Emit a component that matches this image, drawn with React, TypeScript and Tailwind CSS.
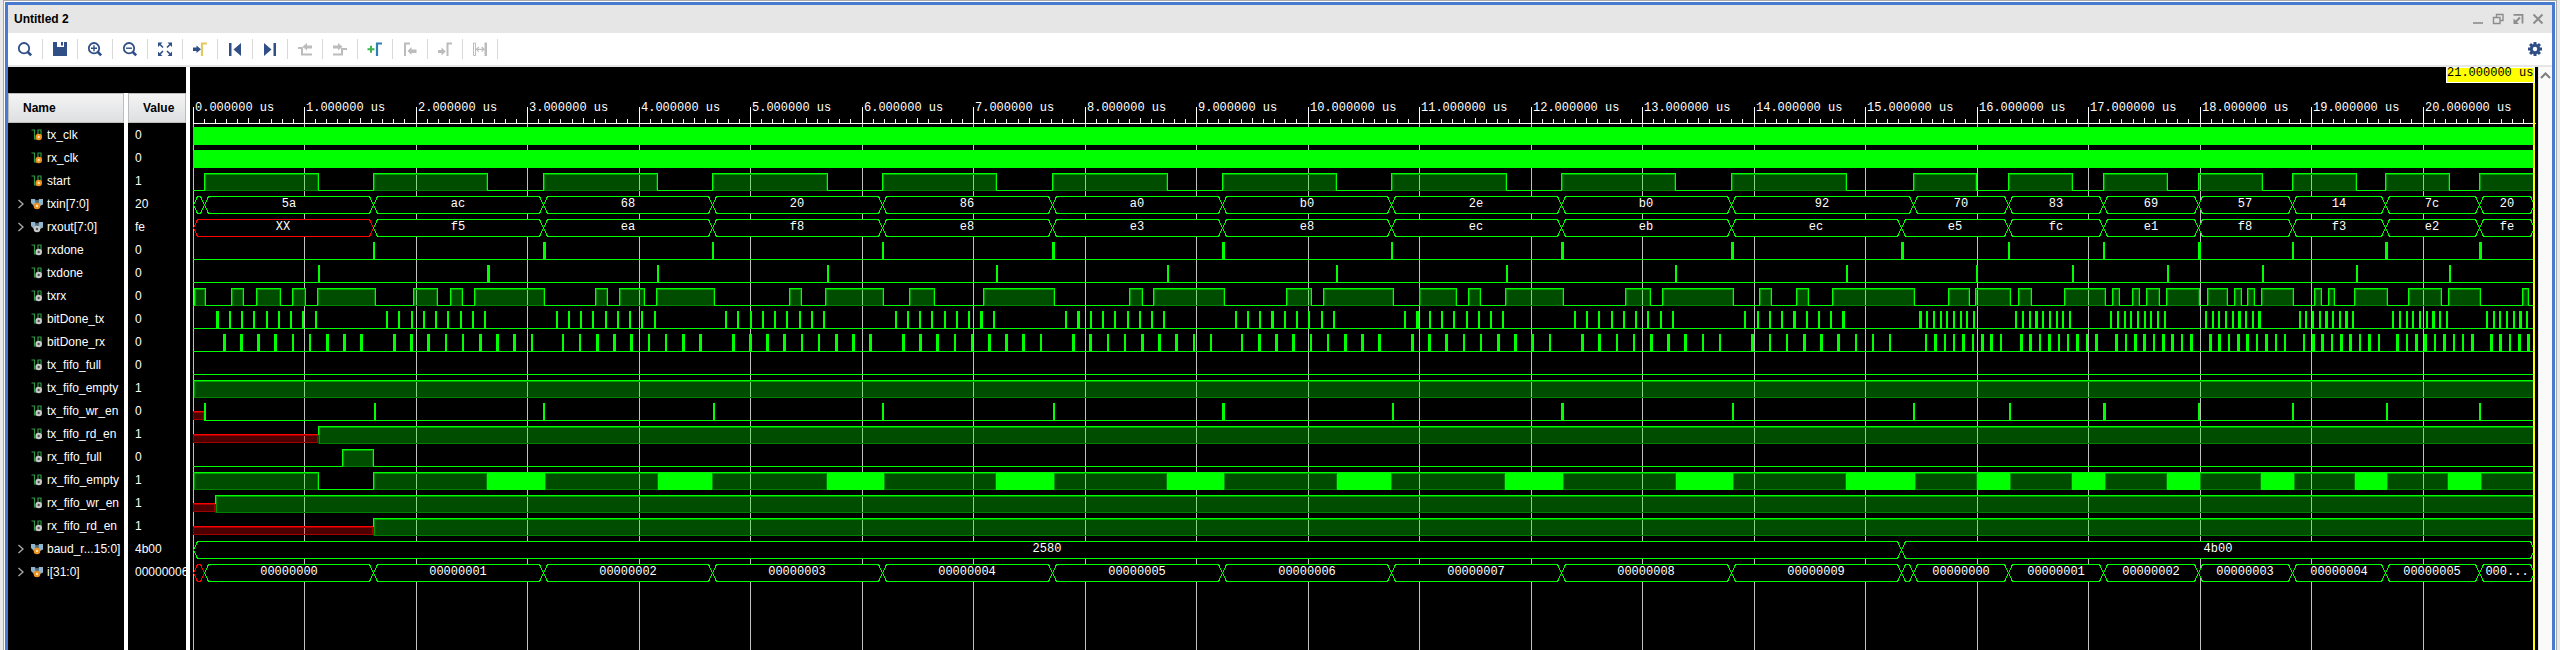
import { useLayoutEffect, useRef, useState, type ReactNode } from "react";

/* ---------- signal data (positions in samples along the time axis) ---------- */

const START = 193;
const END = 2534;
const SAMPLES_PER_US = 111.5;

type Pulse = number | [number, number];
type Segment = [from: number, label: string, unknown?: boolean];

type Wave =
  | { kind: "solid" }
  | { kind: "level"; high: [number, number][]; busy?: [number, number][]; unknownUntil?: number; pulses?: Pulse[] }
  | { kind: "bus"; segments: Segment[] };

type Signal = { name: string; value: string; icon: "in" | "out" | "busIn" | "busOut"; wave: Wave };

const FRAMES = [373, 543, 712, 882, 1052, 1222, 1391, 1561, 1731];
const FAST_FRAMES = [2008, 2103, 2198, 2292, 2385, 2479];

const segments = (at: number[], labels: string[]): Segment[] => at.map((x, i) => [x, labels[i]]);

const START_HIGH: [number, number][] = [
  [204, 318], [373, 487], [543, 657], [712, 827], [882, 996], [1052, 1167], [1222, 1336], [1391, 1506],
  [1561, 1675], [1731, 1846], [1913, 1976], [2008, 2072], [2103, 2167], [2198, 2262], [2292, 2356],
  [2385, 2449], [2479, END],
];

const TXRX_HIGH: [number, number][] = [
  [194, 205], [231, 243], [256, 280], [292, 305], [317, 375], [413, 437], [450, 462], [474, 544],
  [595, 607], [619, 644], [656, 714], [789, 801], [825, 883], [909, 934], [983, 1054], [1129, 1142],
  [1153, 1224], [1286, 1311], [1323, 1393], [1419, 1456], [1468, 1480], [1505, 1563], [1625, 1650],
  [1662, 1733], [1759, 1771], [1796, 1808], [1832, 1914], [1948, 1969], [1975, 2010], [2018, 2031],
  [2064, 2105], [2112, 2119], [2132, 2139], [2146, 2159], [2166, 2199], [2207, 2227], [2234, 2241],
  [2247, 2254], [2261, 2293], [2314, 2321], [2328, 2334], [2354, 2387], [2408, 2441], [2448, 2480],
  [2522, 2528],
];

const BIT_TX: Pulse[] = [
  [216, 3], 229, 241, 253, 266, 278, 290, 302, 315, 386, 398, 411, 423, 435, 447, 460, 472, 484,
  556, 568, 580, 592, 605, 617, 629, 641, 654, 725, 737, 750, 762, 774, 786, 799, 811, 823,
  895, 907, 919, 931, 944, 956, 968, [980, 3], 993, 1065, [1077, 3], 1090, 1102, 1114, 1127, 1139, 1151, 1163,
  1235, 1247, 1259, [1271, 3], 1284, 1296, 1308, 1321, 1333, 1404, [1416, 3], 1429, 1441, 1453, 1466, 1478, 1490, 1502,
  1574, 1586, 1598, 1611, 1623, 1635, 1647, 1660, 1672, 1744, 1757, 1769, 1781, [1793, 3], 1806, 1818, 1830, [1842, 3],
  [1919, 3], 1926, 1933, 1940, 1946, 1953, 1960, 1966, 1973, 2015, 2022, 2029, [2035, 3], 2042, 2049, 2056, 2062, 2069,
  2110, 2117, 2124, 2130, 2137, 2144, 2150, 2157, 2164, 2205, 2212, 2218, 2225, 2232, [2238, 3], 2245, 2252, [2258, 3],
  2299, 2305, 2312, 2319, [2325, 3], 2332, 2339, [2345, 3], 2352, 2392, 2399, 2406, 2412, 2419, 2426, [2432, 3], 2439, 2446,
  2486, 2493, 2499, 2506, 2513, [2519, 3], 2526,
];

const BIT_RX: Pulse[] = [
  [223, 3], [240, 3], [257, 3], [274, 3], 292, 309, [326, 3], [343, 3], [360, 3],
  [393, 3], [410, 3], [427, 3], 445, 462, [479, 3], [496, 3], [513, 3], 531,
  562, 579, [596, 3], [613, 3], [630, 3], 648, 665, [682, 3], [699, 3],
  [732, 3], [749, 3], [766, 3], [783, 3], 801, 818, [835, 3], [852, 3], [869, 3],
  [902, 3], [919, 3], [936, 3], 954, 971, [988, 3], [1005, 3], [1022, 3], 1040,
  [1072, 3], [1089, 3], 1107, 1124, [1141, 3], [1158, 3], [1175, 3], 1193, 1210,
  1241, [1258, 3], [1275, 3], [1292, 3], 1310, 1327, [1344, 3], [1361, 3], [1378, 3],
  [1411, 3], [1428, 3], [1445, 3], 1463, 1480, [1497, 3], [1514, 3], [1531, 3], 1549,
  [1581, 3], [1598, 3], 1616, 1633, [1650, 3], [1667, 3], [1684, 3], 1702, 1719,
  [1751, 3], 1769, 1786, [1803, 3], [1820, 3], [1837, 3], 1855, 1872, 1889,
  1925, [1934, 3], 1944, 1953, [1962, 3], 1972, [1981, 3], [1990, 3], 2000,
  [2020, 3], [2029, 3], 2039, [2048, 3], 2058, 2067, [2076, 3], 2086, [2095, 3],
  [2115, 3], 2125, [2134, 3], [2143, 3], 2153, [2162, 3], [2171, 3], 2181, [2190, 3],
  [2209, 3], [2218, 3], 2228, [2237, 3], [2246, 3], 2256, [2265, 3], 2275, 2284,
  2303, [2312, 3], [2321, 3], 2331, [2340, 3], [2349, 3], 2359, [2368, 3], 2378,
  [2396, 3], 2406, [2415, 3], [2424, 3], 2434, [2443, 3], 2453, 2462, [2471, 3],
  [2490, 3], [2499, 3], 2509, [2518, 3], [2527, 3],
];

const SIGNALS: Signal[] = [
  { name: "tx_clk", value: "0", icon: "in", wave: { kind: "solid" } },
  { name: "rx_clk", value: "0", icon: "in", wave: { kind: "solid" } },
  { name: "start", value: "1", icon: "in", wave: { kind: "level", high: START_HIGH } },
  {
    name: "txin[7:0]", value: "20", icon: "busIn",
    wave: {
      kind: "bus",
      segments: segments(
        [START, 204, ...FRAMES, 1913, ...FAST_FRAMES],
        ["", "5a", "ac", "68", "20", "86", "a0", "b0", "2e", "b0", "92", "70", "83", "69", "57", "14", "7c", "20"],
      ),
    },
  },
  {
    name: "rxout[7:0]", value: "fe", icon: "busOut",
    wave: {
      kind: "bus",
      segments: [
        [START, "XX", true],
        ...segments(
          [...FRAMES, 1901, ...FAST_FRAMES],
          ["f5", "ea", "f8", "e8", "e3", "e8", "ec", "eb", "ec", "e5", "fc", "e1", "f8", "f3", "e2", "fe"],
        ),
      ],
    },
  },
  {
    name: "rxdone", value: "0", icon: "out",
    wave: {
      kind: "level", high: [],
      pulses: [373, [543, 3], 712, 882, [1052, 3], [1222, 3], 1391, [1561, 3], [1731, 3], [1901, 3], 2008, 2103, [2198, 3], 2292, [2385, 3], [2479, 3]],
    },
  },
  {
    name: "txdone", value: "0", icon: "out",
    wave: {
      kind: "level", high: [],
      pulses: [318, [487, 3], 657, 827, 996, 1167, 1336, 1506, 1675, 1846, 1976, 2072, 2167, 2262, 2356, 2449],
    },
  },
  { name: "txrx", value: "0", icon: "out", wave: { kind: "level", high: TXRX_HIGH } },
  { name: "bitDone_tx", value: "0", icon: "out", wave: { kind: "level", high: [], pulses: BIT_TX } },
  { name: "bitDone_rx", value: "0", icon: "out", wave: { kind: "level", high: [], pulses: BIT_RX } },
  { name: "tx_fifo_full", value: "0", icon: "out", wave: { kind: "level", high: [] } },
  { name: "tx_fifo_empty", value: "1", icon: "out", wave: { kind: "level", high: [[START, END]] } },
  {
    name: "tx_fifo_wr_en", value: "0", icon: "out",
    wave: {
      kind: "level", high: [], unknownUntil: 204,
      pulses: [204, 374, 543, 713, 882, 1053, [1222, 3], 1392, [1561, 3], 1732, 1913, 2009, [2103, 3], 2198, 2292, 2386, 2479],
    },
  },
  { name: "tx_fifo_rd_en", value: "1", icon: "out", wave: { kind: "level", high: [[318, END]], unknownUntil: 318 } },
  { name: "rx_fifo_full", value: "0", icon: "out", wave: { kind: "level", high: [[342, 373]] } },
  {
    name: "rx_fifo_empty", value: "1", icon: "out",
    wave: {
      kind: "level",
      high: [
        [START, 318], [373, 487], [544, 658], [711, 827], [883, 996], [1053, 1167], [1223, 1337], [1390, 1505],
        [1562, 1676], [1732, 1846], [1914, 1977], [2009, 2072], [2104, 2167], [2199, 2261], [2293, 2355],
        [2386, 2448], [2480, END],
      ],
      busy: [
        [487, 544], [658, 711], [827, 883], [996, 1053], [1167, 1223], [1337, 1390], [1505, 1562], [1676, 1732],
        [1846, 1914], [1977, 2009], [2072, 2104], [2167, 2199], [2261, 2293], [2355, 2386], [2448, 2480],
      ],
    },
  },
  { name: "rx_fifo_wr_en", value: "1", icon: "out", wave: { kind: "level", high: [[215, END]], unknownUntil: 215 } },
  { name: "rx_fifo_rd_en", value: "1", icon: "out", wave: { kind: "level", high: [[373, END]], unknownUntil: 373 } },
  { name: "baud_r...15:0]", value: "4b00", icon: "busIn", wave: { kind: "bus", segments: [[START, "2580"], [1901, "4b00"]] } },
  {
    name: "i[31:0]", value: "00000006", icon: "busIn",
    wave: {
      kind: "bus",
      segments: [
        [START, "", true],
        ...segments(
          [204, ...FRAMES, 1901, 1913, ...FAST_FRAMES],
          [
            "00000000", "00000001", "00000002", "00000003", "00000004", "00000005", "00000006", "00000007",
            "00000008", "00000009", "", "00000000", "00000001", "00000002", "00000003", "00000004", "00000005", "000...",
          ],
        ),
      ],
    },
  },
];

/* ---------- waveform drawing ---------- */

const LEFT_PAD = 3;
const RIGHT_PAD = 4;
const RULER_Y = 56;
const FIRST_ROW_Y = 60;
const ROW_H = 23;
const LINE = "#00ff00";

function Level({ wave, y, px }: { wave: Extract<Wave, { kind: "level" }>; y: number; px: (t: number) => number }) {
  const end = px(END);
  const bottom = y + 17;
  const lowFrom = px(wave.unknownUntil ?? START);
  const covered = [...wave.high, ...(wave.busy ?? [])].sort((a, b) => a[0] - b[0]);
  const lows: [number, number][] = [];
  let cursor = lowFrom;
  for (const [a, b] of covered) {
    if (px(a) > cursor) lows.push([cursor, px(a) + 1]);
    cursor = px(b);
  }
  if (cursor < end) lows.push([cursor, end]);

  return (
    <g>
      {wave.unknownUntil !== undefined && (
        <g>
          <rect x={px(START)} y={y + 8} width={lowFrom - px(START)} height={9} fill="#ff0000" fillOpacity={0.3} />
          <path
            d={`M${px(START) + 0.5} ${y + 9.5}H${lowFrom - 0.5}V${y + 16.5}H${px(START) + 0.5}Z`}
            fill="none" stroke="#a00000"
          />
          <rect x={px(START)} y={y + 8} width={lowFrom - px(START)} height={1} fill="#ff0000" />
        </g>
      )}
      {lows.map(([a, b], i) => (
        <rect key={i} x={a} y={bottom} width={b - a} height={1} fill={LINE} />
      ))}
      {wave.high.map(([a, b], i) => {
        const x0 = px(a);
        const x1 = px(b);
        const open = b === END;
        const first = a === START;
        return (
          <g key={i}>
            <rect x={x0} y={y} width={x1 - x0 + (open ? 0 : 1)} height={18} fill={LINE} fillOpacity={0.3} />
            <rect x={x0 + 1} y={bottom} width={x1 - x0 - 1} height={1} fill="#008000" />
            <rect x={x0 + 1} y={y + 1} width={x1 - x0 - 1} height={1} fill="#00a000" />
            <rect x={x0 + 1} y={y + 1} width={1} height={16} fill="#009a00" />
            {!open && <rect x={x1 - 1} y={y + 1} width={1} height={16} fill="#008000" />}
            <rect x={x0} y={y} width={x1 - x0} height={1} fill={LINE} />
            {!first && <rect x={x0} y={y} width={1} height={a === wave.unknownUntil ? 9 : 18} fill={LINE} />}
            {!open && <rect x={x1} y={y} width={1} height={18} fill={LINE} />}
          </g>
        );
      })}
      {wave.busy?.map(([a, b], i) => (
        <rect key={i} x={px(a)} y={y} width={px(b) - px(a) + 1} height={18} fill={LINE} />
      ))}
      {wave.pulses?.map((p, i) => {
        const [at, w] = typeof p === "number" ? [p, 2] : p;
        return <rect key={i} x={px(at)} y={y} width={w} height={18} fill={LINE} />;
      })}
    </g>
  );
}

function Bus({ wave, y, px }: { wave: Extract<Wave, { kind: "bus" }>; y: number; px: (t: number) => number }) {
  return (
    <g>
      {wave.segments.map(([from, label, unknown], i) => {
        const next = wave.segments[i + 1];
        const a = px(from) + 0.5;
        const b = px(next ? next[0] : END) + 0.5;
        return (
          <g key={i}>
            <path
              d={`M${a} ${y + 9}L${a + 4} ${y + 0.5}H${b - 4}L${b} ${y + 9}L${b - 4} ${y + 17.5}H${a + 4}Z`}
              fill="#000" stroke={unknown ? "#ff0000" : LINE}
            />
            {label && (
              <text x={Math.floor((a + b) / 2)} y={y + 11} textAnchor="middle" fill="#fff">
                {label}
              </text>
            )}
          </g>
        );
      })}
    </g>
  );
}

function WaveView() {
  const box = useRef<HTMLDivElement>(null);
  const [width, setWidth] = useState(2348);

  useLayoutEffect(() => {
    const el = box.current;
    if (!el) return;
    const measure = () => setWidth(el.clientWidth);
    measure();
    const observer = new ResizeObserver(measure);
    observer.observe(el);
    return () => observer.disconnect();
  }, []);

  const scale = (width - LEFT_PAD - RIGHT_PAD) / (END - START);
  const px = (t: number) => Math.round(LEFT_PAD + (t - START) * scale);
  const us = (n: number) => px(START + Math.floor(n * SAMPLES_PER_US));
  const endX = px(END);
  const majors = Array.from({ length: 21 }, (_, i) => i);
  const minors = Array.from({ length: 210 }, (_, i) => i).filter((i) => i % 10 !== 0);

  return (
    <div ref={box} className="min-w-0 flex-1 overflow-hidden bg-black">
      <svg
        className="block h-full w-full font-['Liberation_Mono',monospace] text-[12px]"
        shapeRendering="crispEdges"
        role="img"
        aria-label="Waveforms"
      >
        {majors.map((n) => (
          <g key={n}>
            <rect x={us(n)} y={RULER_Y} width={1} height="100%" fill="#c0c0c0" />
            <rect x={us(n)} y={40} width={1} height={17} fill="#fff" />
          </g>
        ))}
        {minors.map((n) => (
          <rect key={n} x={us(n / 10)} y={n % 5 === 0 ? 51 : 52} width={1} height={5} fill="#fff" />
        ))}
        {majors.map((n) => (
          <text key={n} x={us(n) + 2} y={44} fill="#fff">
            {n}.000000 us
          </text>
        ))}
        <rect x={LEFT_PAD} y={RULER_Y} width={endX - LEFT_PAD + 2} height={1} fill="#fff" />
        {SIGNALS.map((s, i) => {
          const y = FIRST_ROW_Y + i * ROW_H;
          if (s.wave.kind === "solid")
            return <rect key={s.name} x={px(START)} y={y} width={endX - px(START)} height={18} fill={LINE} />;
          if (s.wave.kind === "bus") return <Bus key={s.name} wave={s.wave} y={y} px={px} />;
          return <Level key={s.name} wave={s.wave} y={y} px={px} />;
        })}
        <rect x={endX - 1} y={0} width={2} height="100%" fill="#ffff00" />
        <rect x={endX - 88} y={0} width={89} height={16} fill="#fff" />
        <rect x={endX - 87} y={1} width={87} height={14} fill="#ffff00" />
        <text x={endX - 87} y={9} fill="#000">
          21.000000 us
        </text>
      </svg>
    </div>
  );
}

/* ---------- icons ---------- */

const NAVY = "#304f87";
const GRAY = "#bcbcbc";

function Icon({ children }: { children: ReactNode }) {
  return (
    <svg viewBox="0 0 16 16" className="size-4" fill="none" aria-hidden="true">
      {children}
    </svg>
  );
}

const lens = (
  <>
    <circle cx="7" cy="7.2" r="5.2" stroke={NAVY} strokeWidth="1.8" />
    <path d="M10.8 11l3.4 3.4" stroke={NAVY} strokeWidth="2.6" />
  </>
);

const TOOLS: { label: string; disabled?: boolean; icon: ReactNode }[] = [
  { label: "Search", icon: lens },
  { label: "Save", icon: <path d="M1 1h4v5h7V1h3v14H1zM9 1h2v3.5H9z" fill={NAVY} /> },
  { label: "Zoom in", icon: <>{lens}<path d="M4 7.2h6M7 4.2v6" stroke={NAVY} strokeWidth="1.4" /></> },
  { label: "Zoom out", icon: <>{lens}<path d="M4 7.2h6" stroke={NAVY} strokeWidth="1.4" /></> },
  {
    label: "Zoom fit",
    icon: (
      <>
        <path d="M1 1.500h4.500L1 6zM15 1.500V6l-4.500-4.500zM1 15v-4.500L5.500 15zM15 15h-4.500l4.500-4.500z" fill={NAVY} />
        <path d="M3 3.500l3 3M13 3.500l-3 3M3 13l3-3M13 13l-3-3" stroke={NAVY} strokeWidth="1.6" />
      </>
    ),
  },
  {
    label: "Go to cursor",
    icon: (
      <>
        <path d="M1 6.500h3.500V4.500L9 8.300l-4.500 3.800V10H1z" fill={NAVY} />
        <path d="M10 15V2.500h5" stroke="#e3c963" strokeWidth="2.2" />
      </>
    ),
  },
  { label: "Go to start", icon: <path d="M2 2h2.500v13H2zM14 2v13L6.500 8.500z" fill={NAVY} /> },
  { label: "Go to end", icon: <path d="M11.500 2H14v13h-2.500zM2 2v13l7.500-6.500z" fill={NAVY} /> },
  {
    label: "Previous transition", disabled: true,
    icon: (
      <>
        <path d="M1 7h4v6.500h10" stroke={GRAY} strokeWidth="2" />
        <path d="M5.500 5.800L10 2v2.500h5v3h-5v2z" fill={GRAY} />
      </>
    ),
  },
  {
    label: "Next transition", disabled: true,
    icon: (
      <>
        <path d="M1 13.500h9V8h5" stroke={GRAY} strokeWidth="2" />
        <path d="M10.500 5.800L6 2v2.500H1v3h5v2z" fill={GRAY} />
      </>
    ),
  },
  {
    label: "Add marker",
    icon: (
      <>
        <path d="M.5 8.300h7M4 4.800v7" stroke="#3fb34f" strokeWidth="2" />
        <path d="M10 15V2.500h5" stroke="#2f7fb5" strokeWidth="2.200" />
      </>
    ),
  },
  {
    label: "Previous marker", disabled: true,
    icon: (
      <>
        <path d="M3 15V2.500h5" stroke={GRAY} strokeWidth="2" />
        <path d="M5.500 10l4-4v2.500h5V12h-5v2z" fill={GRAY} />
      </>
    ),
  },
  {
    label: "Next marker", disabled: true,
    icon: (
      <>
        <path d="M10.500 15V2.500H15" stroke={GRAY} strokeWidth="2" />
        <path d="M1 9h3.500V6.500l4.300 4-4.300 4V12H1z" fill={GRAY} />
      </>
    ),
  },
  {
    label: "Swap cursors", disabled: true,
    icon: (
      <>
        <path d="M1.500 2h2v12.500h-2z" stroke={GRAY} />
        <path d="M12.500 1.500H15V15h-2.500z" fill={GRAY} />
        <path d="M4.500 8.300H12M6.800 6L4.500 8.300l2.300 2.300M9.700 6L12 8.300l-2.300 2.300" stroke={GRAY} strokeWidth="1.200" />
      </>
    ),
  },
];

const WINDOW_BUTTONS: { label: string; icon: ReactNode }[] = [
  { label: "Minimize", icon: <path d="M3 12h10" strokeWidth="1.600" /> },
  { label: "Restore", icon: <path d="M6.500 6V3.500h6.500v6h-2.500M3.500 6.500H10v6H3.500z" strokeWidth="1.400" /> },
  {
    label: "Float",
    icon: (
      <>
        <path d="M3.500 3.800h9v8.700" strokeWidth="1.800" />
        <path d="M10 6.500L5.500 11" strokeWidth="2" />
        <path d="M3.500 7.500V13H9z" fill="#8c8c8c" stroke="none" />
      </>
    ),
  },
  { label: "Close", icon: <path d="M3.500 3.500l9 9M12.500 3.500l-9 9" strokeWidth="2" /> },
];

function Gear() {
  return (
    <Icon>
      <g fill={NAVY}>
        {[0, 45, 90, 135].map((a) => (
          <rect key={a} x="6.500" y="1" width="3" height="14" transform={`rotate(${a} 8 8)`} />
        ))}
        <circle cx="8" cy="8" r="5.200" />
      </g>
      <circle cx="8" cy="8" r="2.200" fill="#fff" />
    </Icon>
  );
}

function Badge({ cx, cy, input }: { cx: number; cy: number; input: boolean }) {
  return (
    <>
      <circle cx={cx} cy={cy} r="3.300" fill={input ? "#f0921e" : "#c9c9c9"} />
      <circle cx={cx} cy={cy} r="1.200" fill={input ? "#ffe2b8" : "#555"} />
    </>
  );
}

function SignalIcon({ kind }: { kind: Signal["icon"] }) {
  const input = kind === "in" || kind === "busIn";
  return (
    <svg viewBox="0 0 12 12" className="size-3 shrink-0" fill="none" aria-hidden="true">
      {kind === "in" || kind === "out" ? (
        <>
          <path d="M.5 1h3v9h3.500V1h3v6" stroke="#2f9a45" strokeWidth="1.200" />
          <Badge cx={7.7} cy={8} input={input} />
        </>
      ) : (
        <>
          <path d="M0 1h4.200v1.500h3.600V1H12v5.500L9 8H3L0 5z" fill="#8fb4cc" />
          <path d="M4.200 2.500h3.600V6H4.200z" fill="#54707f" />
          <Badge cx={6} cy={8} input={input} />
        </>
      )}
    </svg>
  );
}

/* ---------- page ---------- */

function SignalTable() {
  return (
    <table className="h-full w-[182px] table-fixed border-separate border-spacing-0 text-left text-[12px] leading-4 text-white">
      <colgroup>
        <col className="w-[120px]" />
        <col className="w-[62px]" />
      </colgroup>
      <thead>
        <tr className="h-[30px] text-black">
          {["Name", "Value"].map((h) => (
            <th key={h} scope="col" className="h-[30px] border-r-4 border-white p-0 font-bold">
              <div className="flex h-[30px] items-center border border-[#bdbdbd] bg-linear-to-b from-[#f4f4f4] to-[#dedfe1] pl-[14px]">
                {h}
              </div>
            </th>
          ))}
        </tr>
      </thead>
      <tbody>
        {SIGNALS.map((s) => {
          const bus = s.icon === "busIn" || s.icon === "busOut";
          return (
            <tr key={s.name} className="h-[23px]">
              <td className="h-[23px] border-r-4 border-white p-0">
                <div className="flex h-[23px] items-center overflow-hidden pl-[9px] whitespace-nowrap">
                  <span className="flex w-[14px] shrink-0 items-center">
                    {bus && (
                      <button type="button" aria-label={`Expand ${s.name}`} className="block">
                        <svg viewBox="0 0 7 10" className="h-[10px] w-[7px]" fill="none" aria-hidden="true">
                          <path d="M1.500 1L6 5 1.500 9" stroke="#a8a8a8" strokeWidth="1.400" />
                        </svg>
                      </button>
                    )}
                  </span>
                  <SignalIcon kind={s.icon} />
                  <span className="pl-1">{s.name}</span>
                </div>
              </td>
              <td className="h-[23px] border-r-4 border-white p-0">
                <div className="flex h-[23px] items-center overflow-hidden pl-[7px]">{s.value}</div>
              </td>
            </tr>
          );
        })}
        <tr aria-hidden="true">
          <td className="border-r-4 border-white p-0" />
          <td className="border-r-4 border-white p-0" />
        </tr>
      </tbody>
    </table>
  );
}

export default function App() {
  return (
    <div className="flex h-screen min-h-[570px] bg-[#e9e9e9] px-[3px] font-['Liberation_Sans',Arial,sans-serif]">
      <div className="flex min-w-0 flex-1 border-x border-t border-[#a9a9a9] bg-white px-px pt-px">
        <div className="flex min-w-0 flex-1 flex-col border-x-3 border-t-3 border-[#487bcd]">
          <header className="flex h-7 shrink-0 items-center justify-between bg-[#e6e6e6] pr-1 pl-[6px]">
            <h1 className="text-[12px] leading-4 font-bold text-black">Untitled 2</h1>
            <div className="flex">
              {WINDOW_BUTTONS.map((b) => (
                <button key={b.label} type="button" aria-label={b.label} className="flex size-5 items-center justify-center">
                  <svg viewBox="0 0 16 16" className="size-4" fill="none" stroke="#8c8c8c" aria-hidden="true">
                    {b.icon}
                  </svg>
                </button>
              ))}
            </div>
          </header>

          <div className="flex h-[34px] shrink-0 items-center justify-between border-b-2 border-[#e6e6e6] bg-white pr-[9px]">
            <div className="flex" role="toolbar" aria-label="Waveform tools">
              {TOOLS.map((t) => (
                <button
                  key={t.label}
                  type="button"
                  aria-label={t.label}
                  disabled={t.disabled}
                  className="flex h-5 w-[35px] items-center justify-center border-r border-[#d9d9d9]"
                >
                  <Icon>{t.icon}</Icon>
                </button>
              ))}
            </div>
            <button type="button" aria-label="Settings">
              <Gear />
            </button>
          </div>

          <main className="flex min-h-0 flex-1">
            <div className="flex w-[182px] shrink-0 flex-col bg-black">
              <div className="h-[26px] shrink-0 border-r-4 border-white" />
              <div className="min-h-0 flex-1">
                <SignalTable />
              </div>
            </div>
            <WaveView />
            <div className="w-[14px] shrink-0 border-l border-[#e6e6e6] bg-[#fafafa]">
              <button type="button" aria-label="Scroll up" className="flex h-4 w-full items-center justify-center">
                <svg viewBox="0 0 11 7" className="h-[7px] w-[11px]" fill="none" aria-hidden="true">
                  <path d="M1 6l4.500-4.500L10 6" stroke="#7d7d7d" strokeWidth="2" />
                </svg>
              </button>
            </div>
          </main>
        </div>
      </div>
    </div>
  );
}
